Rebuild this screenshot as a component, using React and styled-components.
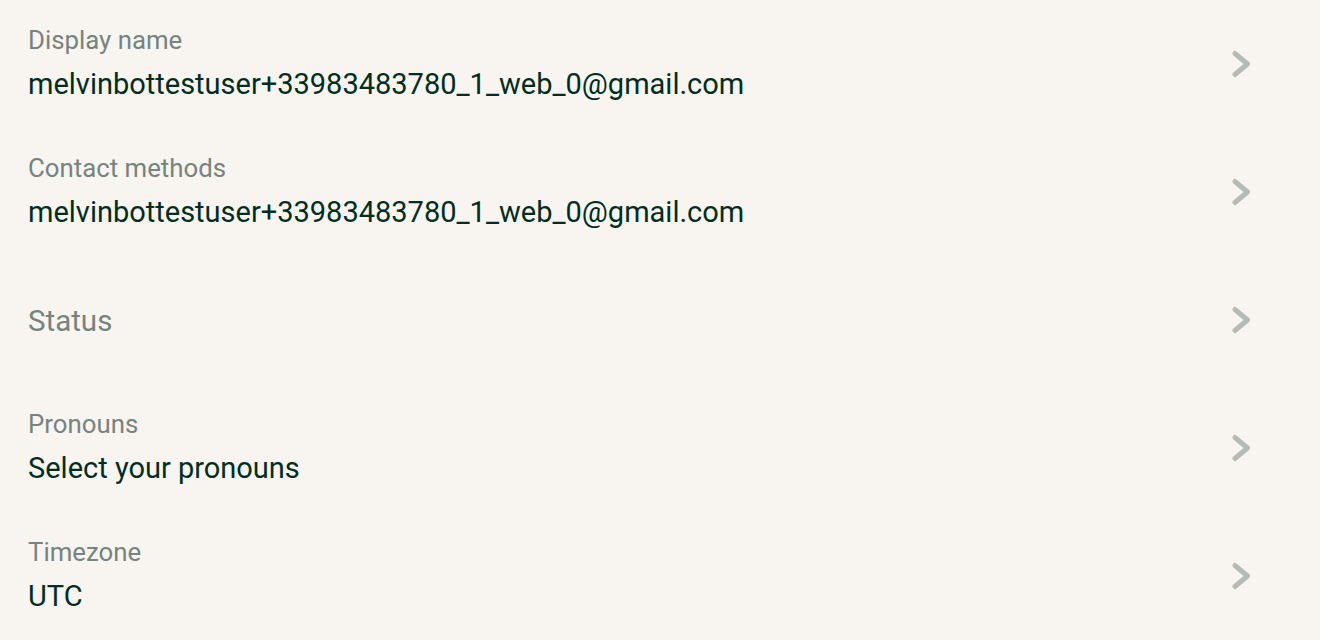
import React from "react";
import styled, { createGlobalStyle } from "styled-components";

const GlobalStyle = createGlobalStyle`
  html, body {
    margin: 0;
    padding: 0;
    background: #f8f4f0;
  }
  body {
    font-family: Roboto, "Liberation Sans", sans-serif;
    -webkit-font-smoothing: antialiased;
  }
`;

const Page = styled.div`
  width: 1320px;
  height: 640px;
  background: #f8f4f0;
  overflow: hidden;
`;

const Row = styled.div`
  height: 128px;
  display: flex;
  align-items: center;
  padding: 0 64px 0 28px;
  box-sizing: border-box;
  cursor: pointer;
`;

const Texts = styled.div`
  flex: 1;
  display: flex;
  flex-direction: column;
  justify-content: center;
  padding-top: 2px;
`;

const Label = styled.div`
  font-size: 25.8px;
  line-height: 20px;
  color: #76847e;
`;

const Value = styled.div`
  margin-top: 18px;
  font-size: 29px;
  line-height: 32px;
  color: #002e22;
`;

const Placeholder = styled.div`
  font-size: 29.5px;
  line-height: 32px;
  color: #76847e;
`;

const Chevron = styled.svg`
  width: 28px;
  height: 28px;
  flex-shrink: 0;
`;

function Arrow() {
  return (
    <Chevron viewBox="0 0 28 28">
      <path
        d="M7 3.5 L19.5 14 L7 24.5"
        fill="none"
        stroke="#b3bdb7"
        strokeWidth="5"
        strokeLinecap="round"
        strokeLinejoin="round"
      />
    </Chevron>
  );
}

const rows = [
  { label: "Display name", value: "melvinbottestuser+33983483780_1_web_0@gmail.com" },
  { label: "Contact methods", value: "melvinbottestuser+33983483780_1_web_0@gmail.com" },
  { placeholder: "Status" },
  { label: "Pronouns", value: "Select your pronouns" },
  { label: "Timezone", value: "UTC" },
];

export default function App() {
  return (
    <Page>
      <GlobalStyle />
      {rows.map((r, i) => (
        <Row key={i}>
          <Texts>
            {r.placeholder ? (
              <Placeholder>{r.placeholder}</Placeholder>
            ) : (
              <>
                <Label>{r.label}</Label>
                <Value>{r.value}</Value>
              </>
            )}
          </Texts>
          <Arrow />
        </Row>
      ))}
    </Page>
  );
}
